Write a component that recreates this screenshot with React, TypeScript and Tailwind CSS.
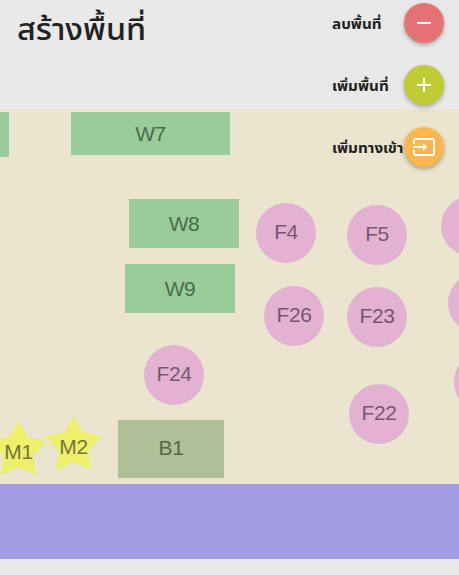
import { MdAdd, MdInput, MdRemove } from "react-icons/md";

type Shape = { x: number; y: number; w: number; h: number; label?: string };

const halls: Shape[] = [
  { x: 0, y: 3, w: 9, h: 45 },
  { x: 71, y: 3, w: 159, h: 43, label: "W7" },
  { x: 129, y: 90, w: 110, h: 49, label: "W8" },
  { x: 125, y: 155, w: 110, h: 49, label: "W9" },
];

const tables: Shape[] = [
  { x: 256, y: 94, w: 60, h: 60, label: "F4" },
  { x: 347, y: 96, w: 60, h: 60, label: "F5" },
  { x: 264, y: 177, w: 60, h: 60, label: "F26" },
  { x: 347, y: 178, w: 60, h: 60, label: "F23" },
  { x: 144, y: 236, w: 60, h: 60, label: "F24" },
  { x: 349, y: 275, w: 60, h: 60, label: "F22" },
  { x: 441, y: 87, w: 60, h: 60 },
  { x: 448, y: 164, w: 60, h: 60 },
  { x: 454, y: 243, w: 60, h: 60 },
];

const stars: Shape[] = [
  { x: -10, y: 312, w: 57, h: 54, label: "M1" },
  { x: 45, y: 307, w: 57, h: 54, label: "M2" },
];

const place = (s: Shape) => ({ left: s.x, top: s.y, width: s.w, height: s.h });

const actions = [
  { label: "ลบพื้นที่", color: "bg-[#e57373]", Icon: MdRemove },
  { label: "เพิ่มพื้นที่", color: "bg-[#c0ca33]", Icon: MdAdd },
  { label: "เพิ่มทางเข้า", color: "bg-[#ffb74d]", Icon: MdInput },
];

function FloorPlan() {
  return (
    <main className="relative h-[375px] overflow-hidden bg-[#ebe5cf] font-['Liberation_Sans',Arial,sans-serif] text-[21px] leading-none tracking-[-0.4px]">
      {halls.map((s, i) => (
        <div key={i} style={place(s)} className="absolute flex items-center justify-center bg-[#9acc9b] text-[#496c4b]">
          {s.label}
        </div>
      ))}
      <div className="absolute left-[118px] top-[311px] flex h-[58px] w-[106px] items-center justify-center bg-[#afbf98] pb-[3px] text-[#56644a]">
        B1
      </div>
      {tables.map((s, i) => (
        <div key={i} style={place(s)} className="absolute flex items-center justify-center rounded-full bg-[#e3b2d3] pb-[3px] text-[#77566f]">
          {s.label}
        </div>
      ))}
      {stars.map((s) => (
        <div key={s.label} style={place(s)} className="absolute flex items-center justify-center text-[#77743a]">
          <svg viewBox="-28.5 -29 57 54" className="absolute inset-0 h-full w-full" fill="#eef06a">
            <path d="M0-29L9-12.7L28-8.5L14.8 5L17.5 25L0 17L-17.5 25L-14.8 5L-28-8.5L-9-12.7Z" />
          </svg>
          <span className="relative top-[3px]">{s.label}</span>
        </div>
      ))}
    </main>
  );
}

export default function App() {
  return (
    <div className="relative flex h-[575px] w-[459px] flex-col overflow-hidden bg-[#e9e9e9] font-['Noto_Sans_Thai','Noto_Sans',sans-serif]">
      <header className="h-[109px] shrink-0 pl-[17px] pt-[11px]">
        <h1 className="w-fit origin-left scale-x-[1.08] whitespace-nowrap text-[30px] font-medium leading-[40px] text-[#212121]">สร้างพื้นที่</h1>
      </header>
      <FloorPlan />
      <div className="h-[75px] shrink-0 bg-[#a39de3]" />
      <div className="absolute left-[332px] top-[3px] flex w-28 flex-col gap-[22px]">
        {actions.map(({ label, color, Icon }) => (
          <div key={label} className="flex h-10 items-center justify-between">
            <span className="w-[72px] origin-left scale-x-[1.09] whitespace-nowrap pt-[3px] text-[14px] font-bold leading-5 text-[#212121]">{label}</span>
            <button
              aria-label={label}
              className={`relative flex size-10 shrink-0 items-center justify-center rounded-full text-white shadow-[0_2px_4px_rgba(0,0,0,0.3)] ${color}`}
            >
              <Icon size={24} />
            </button>
          </div>
        ))}
      </div>
    </div>
  );
}
